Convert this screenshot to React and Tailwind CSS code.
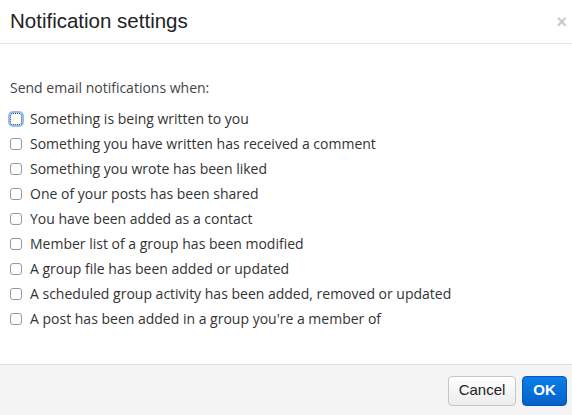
const items = [
  'Something is being written to you',
  'Something you have written has received a comment',
  'Something you wrote has been liked',
  'One of your posts has been shared',
  'You have been added as a contact',
  'Member list of a group has been modified',
  'A group file has been added or updated',
  'A scheduled group activity has been added, removed or updated',
  "A post has been added in a group you're a member of",
]

export default function App() {
  return (
    <div className="flex h-[415px] w-[572px] flex-col bg-white text-[#333]">
      <div className="flex h-[44px] items-center justify-between border-b border-[#e5e5e5] pl-[10px] pr-[5px]">
        <h1 className="font-['Liberation_Sans',Arial,sans-serif] text-[20.5px] leading-none text-[#222]">
          Notification settings
        </h1>
        <button className="font-['Liberation_Sans',Arial,sans-serif] text-[18px] font-bold leading-none text-[#c8c8c8]">
          ×
        </button>
      </div>

      <div className="flex-1 px-[10px] pt-[34px] font-['Open_Sans',sans-serif] text-[14px]">
        <p className="mb-[9px] leading-[19px] text-[#444]">Send email notifications when:</p>
        <div className="flex flex-col">
          {items.map((label, i) => (
            <label key={label} className="flex h-[25px] items-center gap-[8px] text-[#333]">
              <span
                className={
                  i === 0
                    ? 'h-[12px] w-[12px] rounded-[3px] border border-dotted border-[#333] bg-white shadow-[0_0_0_2px_#8fbff6]'
                    : 'h-[12px] w-[12px] rounded-[3px] border border-[#999] bg-white'
                }
              />
              <span className="leading-none">{label}</span>
            </label>
          ))}
        </div>
      </div>

      <div className="flex h-[51px] items-center justify-end gap-[6px] border-t border-[#ddd] bg-[#f4f4f4] pr-[5px] pt-[1px] font-['Liberation_Sans',Arial,sans-serif]">
        <button className="h-[30px] w-[68px] rounded-[4px] border border-[#c6c6c6] bg-gradient-to-b from-white to-[#ececec] text-[15px] text-[#222]">
          Cancel
        </button>
        <button className="h-[30px] w-[45px] rounded-[4px] border border-[#0758b6] bg-gradient-to-b from-[#0b7ee9] to-[#0562c9] text-[15px] font-bold text-white">
          OK
        </button>
      </div>
    </div>
  )
}
